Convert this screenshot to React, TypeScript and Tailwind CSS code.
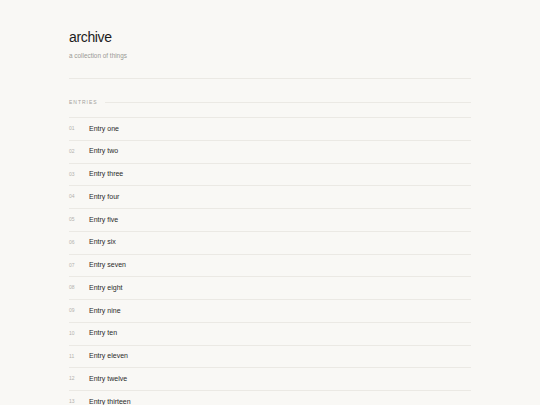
const entries = [
  "one",
  "two",
  "three",
  "four",
  "five",
  "six",
  "seven",
  "eight",
  "nine",
  "ten",
  "eleven",
  "twelve",
  "thirteen",
];

export default function App() {
  return (
    <div className="min-h-screen bg-[#f9f8f5] font-['Liberation_Sans',Arial,sans-serif]">
      <div className="mx-auto w-[402px] pt-[29px]">
        <h1 className="text-[14px] leading-[16px] tracking-tight text-[#1c1c1c]">archive</h1>
        <p className="mt-[7px] text-[6.4px] leading-[8px] text-[#9a9894]">a collection of things</p>
        <div className="mt-[18px] h-px bg-[#ebe9e4]" />

        <div className="mt-[19px] flex items-center gap-[7px]">
          <span className="text-[5px] leading-[8px] tracking-[0.2em] text-[#a3a19c]">ENTRIES</span>
          <div className="h-px flex-1 bg-[#ebe9e4]" />
        </div>

        <ul className="mt-[11px] border-t border-[#ebe9e4]">
          {entries.map((name, i) => (
            <li
              key={name}
              className="flex h-[22.75px] items-center border-b border-[#ebe9e4]"
            >
              <span className="w-[20px] text-[5px] text-[#b3b1ac]">
                {String(i + 1).padStart(2, "0")}
              </span>
              <span className="text-[7px] text-[#2a2a2a]">Entry {name}</span>
            </li>
          ))}
        </ul>
      </div>
    </div>
  );
}
